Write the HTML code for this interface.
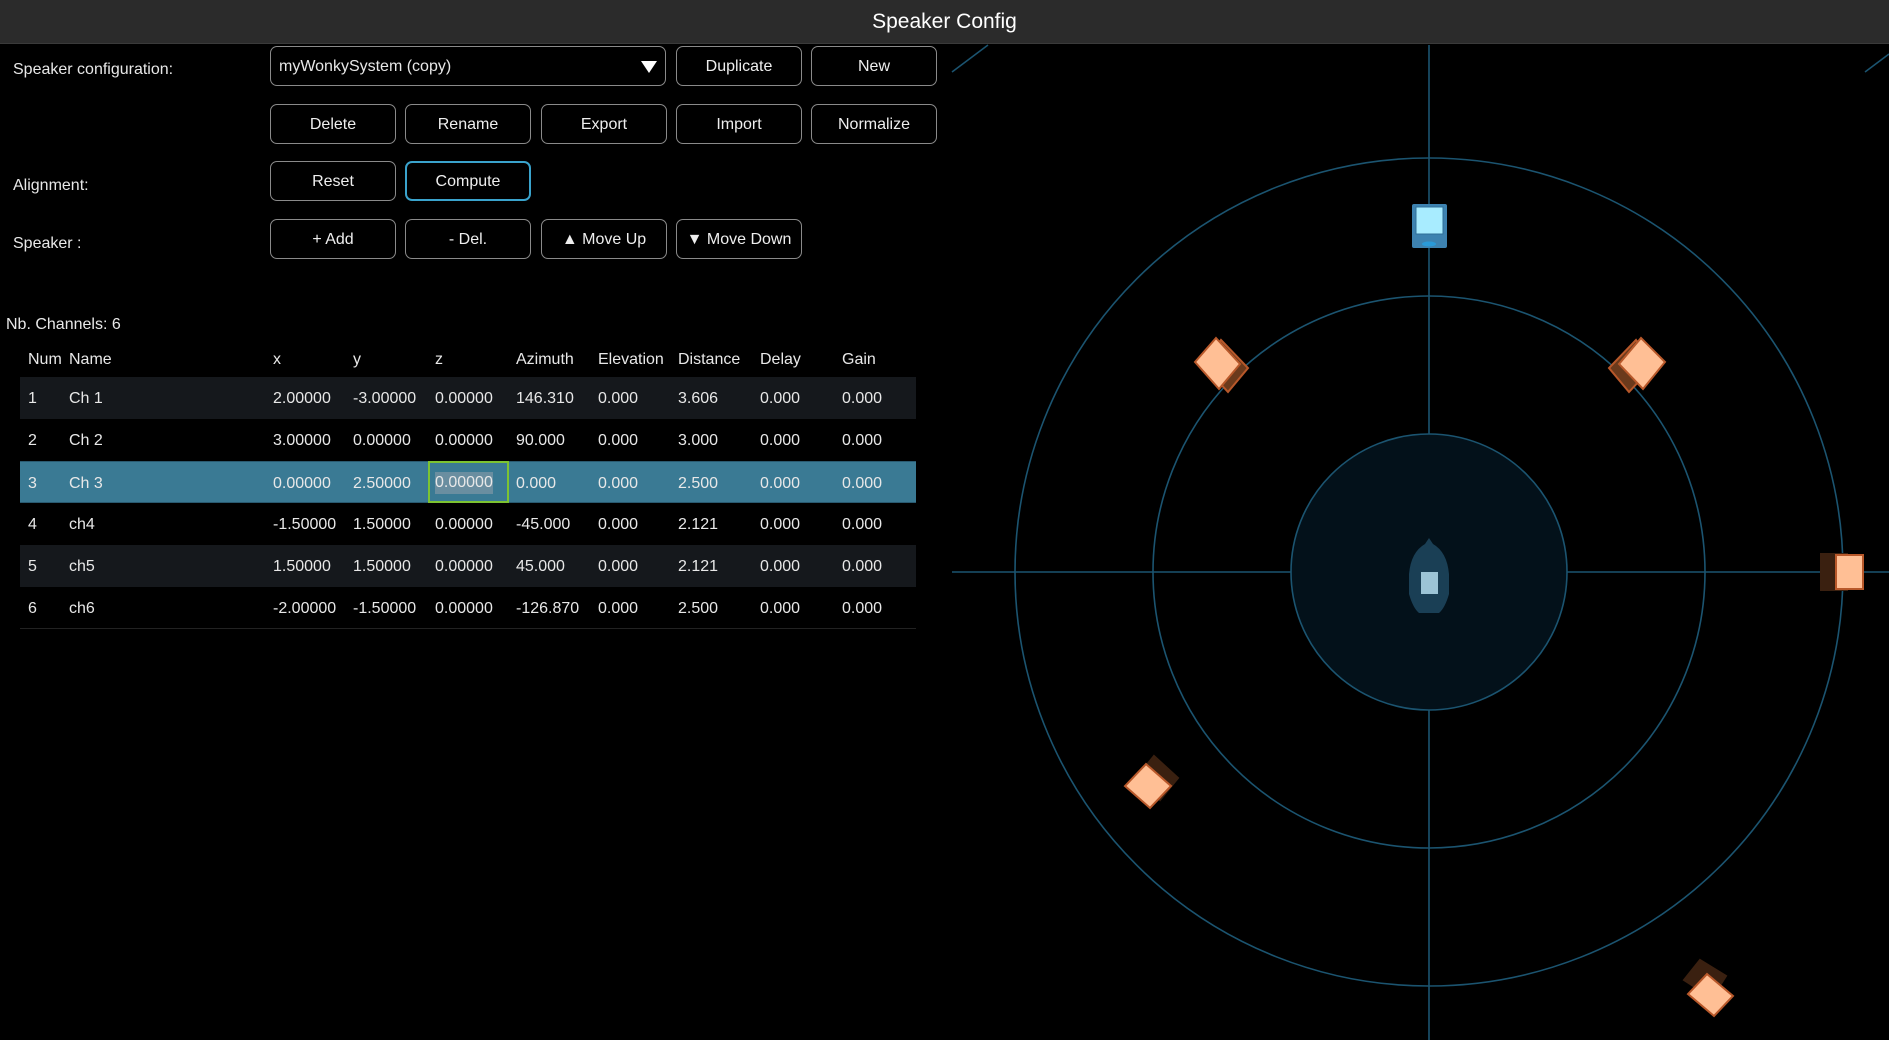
<!DOCTYPE html>
<html><head><meta charset="utf-8"><style>
*{margin:0;padding:0;box-sizing:border-box}
body{width:1889px;height:1040px;background:#000;color:#e8e8e8;font-family:"Liberation Sans",sans-serif;font-size:16px;position:relative;overflow:hidden}
.title{position:absolute;left:0;top:0;width:1889px;height:44px;background:#2b2b2b;border-bottom:1px solid #3a3a3a;text-align:center;line-height:43px;font-size:21px;color:#fff}
.lbl{position:absolute;left:13px;font-size:16px}
.btn{position:absolute;height:40px;border:1px solid #8a8a8a;border-radius:7px;text-align:center;line-height:40px;font-size:16px;color:#eee;background:#000}
.sel{border:2px solid #3aa3cc}
.combo{position:absolute;left:270px;top:46px;width:396px;height:40px;border:1px solid #8a8a8a;border-radius:7px;line-height:40px;padding-left:8px;font-size:16px}
.tri{position:absolute;right:8px;top:14px;width:0;height:0;border-left:8px solid transparent;border-right:8px solid transparent;border-top:12px solid #fff}
.row{position:absolute;left:20px;width:896px;height:42px;line-height:44px;font-size:16px}
.row span,.hdr span{position:absolute;top:0}
.hdr{position:absolute;left:0;top:351px;height:24px;width:916px;font-size:16px}
</style></head><body>
<div class="title">Speaker Config</div>
<div class="lbl" style="top:61px">Speaker configuration:</div>
<div class="lbl" style="top:177px">Alignment:</div>
<div class="lbl" style="top:235px">Speaker :</div>
<div class="combo">myWonkySystem (copy)<div class="tri"></div></div>
<div class="btn" style="left:676px;top:46px;width:126px">Duplicate</div>
<div class="btn" style="left:811px;top:46px;width:126px">New</div>
<div class="btn" style="left:270px;top:104px;width:126px">Delete</div>
<div class="btn" style="left:405px;top:104px;width:126px">Rename</div>
<div class="btn" style="left:541px;top:104px;width:126px">Export</div>
<div class="btn" style="left:676px;top:104px;width:126px">Import</div>
<div class="btn" style="left:811px;top:104px;width:126px">Normalize</div>
<div class="btn" style="left:270px;top:161px;width:126px">Reset</div>
<div class="btn sel" style="left:405px;top:161px;width:126px;line-height:38px">Compute</div>
<div class="btn" style="left:270px;top:219px;width:126px">+ Add</div>
<div class="btn" style="left:405px;top:219px;width:126px">- Del.</div>
<div class="btn" style="left:541px;top:219px;width:126px">▲ Move Up</div>
<div class="btn" style="left:676px;top:219px;width:126px">▼ Move Down</div>
<div class="lbl" style="left:6px;top:316px">Nb. Channels: 6</div>
<div class="hdr"><span style="left:28px;width:34px;overflow:hidden;white-space:nowrap">Num</span><span style="left:69px">Name</span><span style="left:273px">x</span><span style="left:353px">y</span><span style="left:435px">z</span><span style="left:516px">Azimuth</span><span style="left:598px">Elevation</span><span style="left:678px">Distance</span><span style="left:760px">Delay</span><span style="left:842px">Gain</span></div>
<div style="position:absolute;left:20px;top:377px;width:896px;height:252px;border-bottom:1px solid #222"></div>
<div class="row" style="top:377px;background:#15181c"><span style="left:8px">1</span><span style="left:49px">Ch 1</span><span style="left:253px">2.00000</span><span style="left:333px">-3.00000</span><span style="left:415px">0.00000</span><span style="left:496px">146.310</span><span style="left:578px">0.000</span><span style="left:658px">3.606</span><span style="left:740px">0.000</span><span style="left:822px">0.000</span></div>
<div class="row" style="top:419px"><span style="left:8px">2</span><span style="left:49px">Ch 2</span><span style="left:253px">3.00000</span><span style="left:333px">0.00000</span><span style="left:415px">0.00000</span><span style="left:496px">90.000</span><span style="left:578px">0.000</span><span style="left:658px">3.000</span><span style="left:740px">0.000</span><span style="left:822px">0.000</span></div>
<div class="row" style="top:461px;background:#3a7a94;border-top:1px solid #2a5a70;border-bottom:1px solid #2a5a70"><span style="left:8px">3</span><span style="left:49px">Ch 3</span><span style="left:253px">0.00000</span><span style="left:333px">2.50000</span><span style="left:408px;top:-1px;width:81px;height:42px;border:2px solid #7cc332"></span><span style="left:415px;line-height:22px;top:10px;background:#6a8ea0">0.00000</span><span style="left:496px">0.000</span><span style="left:578px">0.000</span><span style="left:658px">2.500</span><span style="left:740px">0.000</span><span style="left:822px">0.000</span></div>
<div class="row" style="top:503px"><span style="left:8px">4</span><span style="left:49px">ch4</span><span style="left:253px">-1.50000</span><span style="left:333px">1.50000</span><span style="left:415px">0.00000</span><span style="left:496px">-45.000</span><span style="left:578px">0.000</span><span style="left:658px">2.121</span><span style="left:740px">0.000</span><span style="left:822px">0.000</span></div>
<div class="row" style="top:545px;background:#15181c"><span style="left:8px">5</span><span style="left:49px">ch5</span><span style="left:253px">1.50000</span><span style="left:333px">1.50000</span><span style="left:415px">0.00000</span><span style="left:496px">45.000</span><span style="left:578px">0.000</span><span style="left:658px">2.121</span><span style="left:740px">0.000</span><span style="left:822px">0.000</span></div>
<div class="row" style="top:587px"><span style="left:8px">6</span><span style="left:49px">ch6</span><span style="left:253px">-2.00000</span><span style="left:333px">-1.50000</span><span style="left:415px">0.00000</span><span style="left:496px">-126.870</span><span style="left:578px">0.000</span><span style="left:658px">2.500</span><span style="left:740px">0.000</span><span style="left:822px">0.000</span></div>

<svg style="position:absolute;left:0;top:0" width="1889" height="1040">
<g stroke="#1b5470" stroke-width="1.6" fill="none">
<circle cx="1429" cy="572" r="138" fill="#03111a"/>
<circle cx="1429" cy="572" r="276"/>
<circle cx="1429" cy="572" r="414"/>
<line x1="952" y1="572" x2="1291" y2="572"/><line x1="1567" y1="572" x2="1889" y2="572"/>
<line x1="1429" y1="45" x2="1429" y2="434"/><line x1="1429" y1="710" x2="1429" y2="1040"/>
<line x1="952" y1="72" x2="988" y2="45"/><line x1="1865" y1="72" x2="1889" y2="54"/>
</g>
<!-- head -->
<path d="M1429 538 l4 6 q14 8 16 30 l0 20 q-4 14 -10 19 h-20 q-6 -5 -10 -19 l0 -20 q2 -22 16 -30z" fill="#1a3f55"/>
<rect x="1421" y="572" width="17" height="22" fill="#9cc4d6"/>
<!-- top blue speaker -->
<rect x="1412" y="204" width="35" height="44" rx="2" fill="#3d82b0"/>
<rect x="1416" y="207" width="27" height="27" fill="#a8ecff" stroke="#2f6f98"/>
<ellipse cx="1429" cy="244" rx="7" ry="2.5" fill="#2a9ad8"/>
<g stroke="#b8582a" stroke-width="2">
<path d="M1221 340 L1248 368 L1228 392 L1204 366Z" fill="#6b3a1c"/>
<path d="M1216 338 L1240 364 L1219 389 L1195 362Z" fill="#ffbf95"/>
<path d="M1636 340 L1609 368 L1629 392 L1653 366Z" fill="#6b3a1c"/>
<path d="M1641 338 L1665 362 L1643 389 L1619 364Z" fill="#ffbf95"/>
<rect x="1821" y="554" width="26" height="36" fill="#3a2010" stroke="#3a2010"/>
<rect x="1836" y="555" width="27" height="34" fill="#ffbf95"/>
<path d="M1154 756 L1178 778 L1160 800 L1136 778Z" fill="#3a2010" stroke="#3a2010"/>
<path d="M1146 764 L1171 786 L1150 808 L1125 786Z" fill="#ffbf95"/>
<path d="M1700 960 L1726 976 L1712 998 L1684 980Z" fill="#3a2010" stroke="#3a2010"/>
<path d="M1707 974 L1733 996 L1714 1016 L1688 994Z" fill="#ffbf95"/>
</g>
</svg>
</body></html>
